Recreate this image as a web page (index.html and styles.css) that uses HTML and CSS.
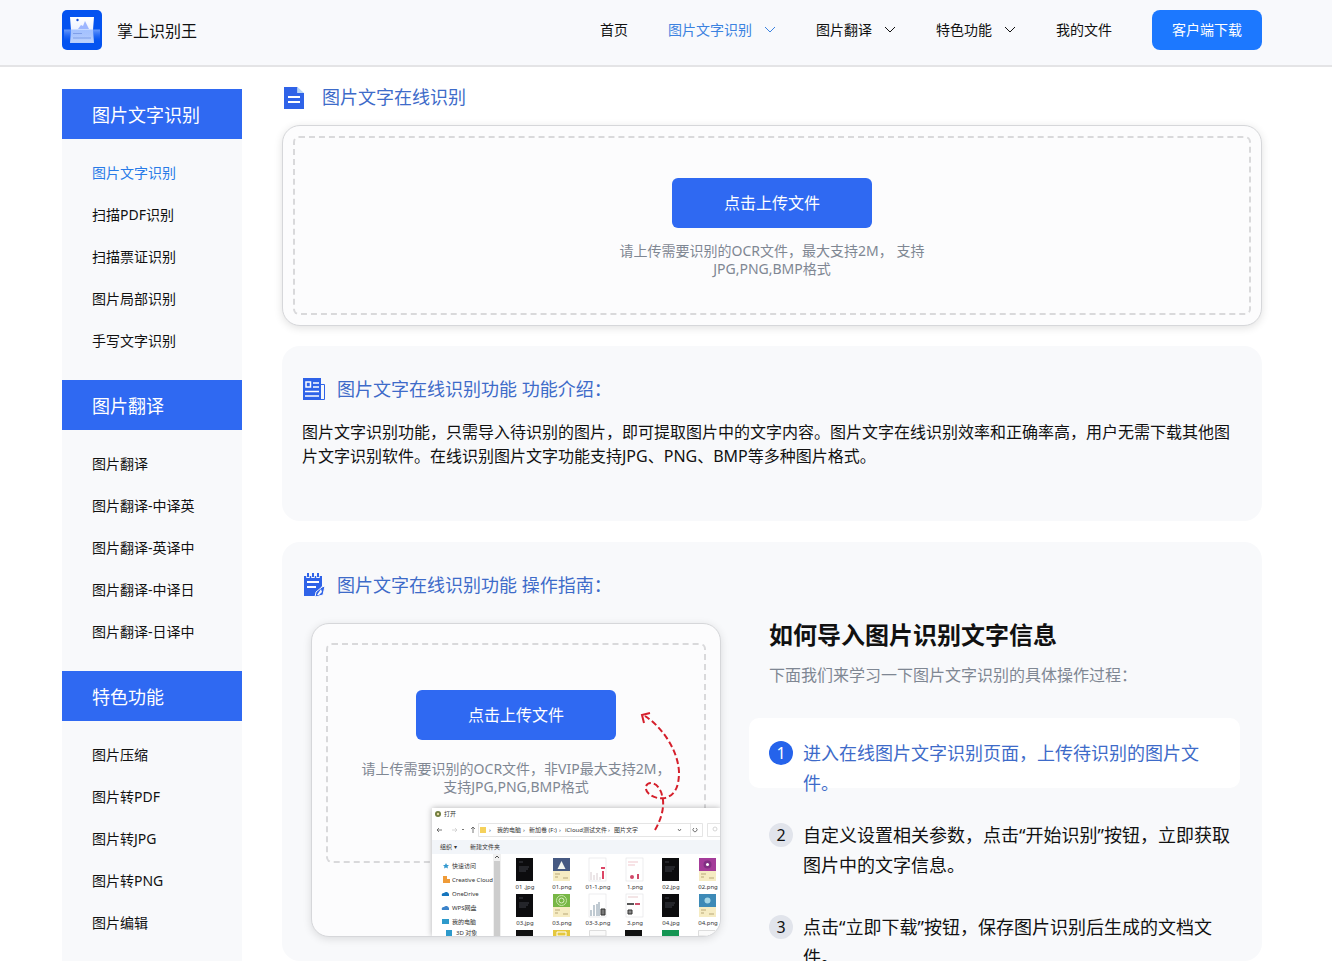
FILE: index.html
```
<!DOCTYPE html>
<html lang="zh-CN">
<head>
<meta charset="utf-8">
<meta name="viewport" content="width=device-width, initial-scale=1">
<title>掌上识别王</title>
<link rel="stylesheet" href="styles.css">
</head>
<body>
<div class="shell">
  <header class="header">
    <div class="wrap header-row">
      <a class="brand" href="#">
        <svg class="logo" width="40" height="40" viewBox="0 0 40 40" aria-hidden="true">
          <defs>
            <linearGradient id="sheet" x1="0" y1="0" x2="0" y2="1"><stop offset="0" stop-color="#fff"/><stop offset=".45" stop-color="#eef3ff"/><stop offset="1" stop-color="#b4cdfc"/></linearGradient>
            <linearGradient id="scan" x1="0" y1="0" x2="0" y2="1"><stop offset="0" stop-color="#8db3ff" stop-opacity=".75"/><stop offset="1" stop-color="#3d78fb" stop-opacity="0"/></linearGradient>
          </defs>
          <rect width="40" height="40" rx="5" fill="#0453f0"/>
          <path d="M8 7H32L31 20 32 33H8L9 20Z" fill="url(#sheet)"/>
          <path d="m16 19 3-4 2 1 2-5 4 8Z" fill="#9db6ff"/>
          <circle cx="15.500" cy="10" r="1.200" fill="#1550d8"/>
          <path d="M2 19.500H38V31H2Z" fill="url(#scan)"/>
          <path d="M11 23.500H20M11 28H29" stroke="#7f9fe9" stroke-width="1"/>
        </svg>
        <span>掌上识别王</span>
      </a>
      <nav class="nav">
        <a href="#">首页</a>
        <a class="current" href="#">图片文字识别<svg class="chev" viewBox="0 0 12 8"><path d="m1 1 5 5 5-5"/></svg></a>
        <a href="#">图片翻译<svg class="chev" viewBox="0 0 12 8"><path d="m1 1 5 5 5-5"/></svg></a>
        <a href="#">特色功能<svg class="chev" viewBox="0 0 12 8"><path d="m1 1 5 5 5-5"/></svg></a>
        <a href="#">我的文件</a>
        <button class="download" type="button">客户端下载</button>
      </nav>
    </div>
  </header>

  <div class="wrap body-row">
    <aside class="sidebar">
      <h2>图片文字识别</h2>
      <ul>
        <li><a class="current" href="#">图片文字识别</a></li>
        <li><a href="#">扫描PDF识别</a></li>
        <li><a href="#">扫描票证识别</a></li>
        <li><a href="#">图片局部识别</a></li>
        <li><a href="#">手写文字识别</a></li>
      </ul>
      <h2>图片翻译</h2>
      <ul>
        <li><a href="#">图片翻译</a></li>
        <li><a href="#">图片翻译-中译英</a></li>
        <li><a href="#">图片翻译-英译中</a></li>
        <li><a href="#">图片翻译-中译日</a></li>
        <li><a href="#">图片翻译-日译中</a></li>
      </ul>
      <h2>特色功能</h2>
      <ul>
        <li><a href="#">图片压缩</a></li>
        <li><a href="#">图片转PDF</a></li>
        <li><a href="#">图片转JPG</a></li>
        <li><a href="#">图片转PNG</a></li>
        <li><a href="#">图片编辑</a></li>
      </ul>
    </aside>

    <main class="main">
      <h1 class="title page-title">
        <svg width="24" height="24" viewBox="0 0 24 24" aria-hidden="true"><path d="M2 2H15.500V8H22V24H2Z" fill="#2f63e8"/><path d="M15.500 2 22 8H15.500Z" fill="#b7d5f5"/><path d="M6 12H18M6 17H18" stroke="#fff" stroke-width="2"/></svg>
        <span>图片文字在线识别</span>
      </h1>

      <section class="upload frame">
        <div class="drop">
          <button class="upload-btn" type="button">点击上传文件</button>
          <p>请上传需要识别的OCR文件，最大支持2M， 支持<br>JPG,PNG,BMP格式</p>
        </div>
      </section>

      <section class="card intro">
        <h2 class="title">
          <svg width="24" height="24" viewBox="0 0 24 24" aria-hidden="true"><path d="M1 1H19V23H1Z" fill="#2f63e8"/><path d="M19 7.500H22.500V22.500H19" fill="none" stroke="#2f63e8"/><path d="M4 5H8.500V10H4ZM11 6H17M11 10H17M3 14.500H17M3 19H17" fill="none" stroke="#fff" stroke-width="1.500"/></svg>
          <span>图片文字在线识别功能 功能介绍：</span>
        </h2>
        <p>图片文字识别功能，只需导入待识别的图片，即可提取图片中的文字内容。图片文字在线识别效率和正确率高，用户无需下载其他图片文字识别软件。在线识别图片文字功能支持JPG、PNG、BMP等多种图片格式。</p>
      </section>

      <section class="card guide">
        <h2 class="title">
          <svg width="24" height="24" viewBox="0 0 24 24" aria-hidden="true"><path d="M2 3H20V13L13 23H2Z" fill="#2f63e8"/><path d="M6 0V5M11 0V5M16 0V5" stroke="#f8f9fb" stroke-width="3.500"/><path d="M6 0V4M11 0V4M16 0V4" stroke="#2f63e8" stroke-width="2"/><path d="M5 9H17M5 14H14" stroke="#fff" stroke-width="2"/><path d="M23 13 21 22 13 24 14 19 20 14Z" fill="#2f63e8" stroke="#f8f9fb"/><path d="m15 22 4-6 1 3-3 3Z" fill="#f8f9fb"/></svg>
          <span>图片文字在线识别功能 操作指南：</span>
        </h2>
        <div class="guide-row">
          <div class="demo frame">
            <div class="drop">
              <button class="upload-btn" type="button">点击上传文件</button>
              <p>请上传需要识别的OCR文件，非VIP最大支持2M，<br>支持JPG,PNG,BMP格式</p>
            </div>
            <svg class="dialog" width="288" height="128" viewBox="0 0 288 128" role="img" aria-label="打开文件窗口">
              <defs>
                <g id="dark"><rect width="17" height="23" fill="#0c0c0e"/><path d="M3 4H7M3 9H13M3 11H12M3 13H10" stroke="#55585f" stroke-width=".7"/></g>
                <g id="sheet-a"><rect width="17" height="23" fill="#fff" stroke="#e2e2e4" stroke-width=".6"/><path d="M2 22V14M5 22V17M8 22V15M11 22V19" stroke="#d8ccd0"/><path d="M12 10H16M14 13V21" stroke="#dc4565" stroke-width="2"/></g>
                <g id="sheet-b"><rect width="17" height="23" fill="#fff" stroke="#e2e2e4" stroke-width=".6"/><path d="M2 4H12M2 7H9" stroke="#e9b0b8" stroke-width=".7"/><circle cx="6" cy="19" r="2" fill="#d04868"/><path d="M12 16V21" stroke="#d04868" stroke-width="2"/></g>
                <g id="sheet-c"><rect width="17" height="23" fill="#fff" stroke="#e2e2e4" stroke-width=".6"/><path d="M2 22V16M5 22V11M8 10V22M10 8V22" stroke="#8195a5"/><path d="M12 15H16V21H12Z" fill="#777" stroke="#333"/></g>
                <g id="sheet-d"><rect width="17" height="23" fill="#fff" stroke="#e2e2e4" stroke-width=".6"/><path d="M2 3H12" stroke="#ddb4b8" stroke-width=".7"/><path d="M1 10H8" stroke="#555" stroke-width="2"/><path d="M9 10H14" stroke="#cc526d" stroke-width="2"/><path d="M2 16H6V20H2Z" fill="#888" stroke="#333"/></g>
                <g id="note"><path d="M0 13H17V23H0Z" fill="#f6ecc3"/><path d="M2 16H7M2 19H5M10 20H15" stroke="#b9a878"/></g>
              </defs>
              <rect width="288" height="128" fill="#fff"/>
              <circle cx="6" cy="6" r="3" fill="#6f7d3f"/><circle cx="6" cy="6" r="1.200" fill="#e8d9a2"/>
              <text x="12" y="8">打开</text>
              <g fill="none" stroke="#555" stroke-width=".8">
                <path d="M10 22H5M7 20 5 22 7 24"/><path d="M20 22H25M23 20 25 22 23 24" stroke="#ccc"/><path d="m30 21 1 1 1-1M41 25V19M39 21 41 19 43 21"/>
                <path d="m246 21 1.500 2 1.500-2M264 20A2 2 0 1 1 262 20"/>
                <path d="M46.500 15.500H270.500V28.500H46.500ZM258.500 15V29M288 15.500H275.500V28.500H288" stroke="#dedede"/>
              </g>
              <path d="M48 19H54V25H48Z" fill="#f5d15b"/>
              <text x="57" y="24">›</text><text x="65" y="24">我的电脑</text><text x="91" y="24">›</text><text x="97" y="24">新加卷 (F:)</text><text x="127" y="24">›</text><text x="133" y="24">iCloud测试文件</text><text x="176" y="24">›</text><text x="182" y="24">图片文字</text>
              <circle cx="283" cy="21" r="2" fill="none" stroke="#ccc" stroke-width=".8"/>
              <rect y="32" width="288" height="14" fill="#f2f5f9"/>
              <text x="8" y="41">组织 ▾</text><text x="38" y="41">新建文件夹</text>
              <path d="m14 55 1 2h2l-1.500 1.500.5 2-2-1-2 1 .5-2L11 57h2Z" fill="#3499cf"/>
              <path d="M11 68H15V71H18V75H11Z" fill="#ef9b38"/>
              <path d="M10 88a2 2 0 0 1 2-3 3 3 0 0 1 5 1v2Z" fill="#1675bd"/>
              <path d="M10 102a2 2 0 0 1 2-3 3 3 0 0 1 5 1v2Z" fill="#3c83ca"/>
              <path d="M10 111H17V116H10ZM14 122H20V128H14Z" fill="#2e9acb"/>
              <text x="20" y="60">快速访问</text><text x="20" y="74">Creative Cloud F</text><text x="20" y="88">OneDrive</text><text x="20" y="102">WPS网盘</text><text x="20" y="116">我的电脑</text><text x="24" y="127">3D 对象</text>
              <rect x="61" y="46" width="8" height="82" fill="#f0f0f0"/><rect x="62" y="53" width="6" height="75" fill="#cdcdcd"/><path d="m63 50 2-2 2 2" fill="none" stroke="#555"/>
              <use href="#dark" x="84" y="50"/><use href="#sheet-a" x="157" y="50"/><use href="#sheet-b" x="194" y="50"/><use href="#dark" x="230" y="50"/>
              <g transform="translate(121 50)"><path d="M0 0H17V13H0Z" fill="#465982"/><path d="m8.500 3 4 8h-8Z" fill="#f3f5ef"/><use href="#note"/></g>
              <g transform="translate(267 50)"><path d="M0 0H17V13H0Z" fill="#a43c9a"/><circle cx="8.500" cy="6.500" r="4" fill="#812f83"/><circle cx="8.500" cy="6.500" r="1.500" fill="#fff"/><use href="#note"/></g>
              <use href="#dark" x="84" y="86"/><use href="#sheet-c" x="157" y="86"/><use href="#sheet-d" x="194" y="86"/><use href="#dark" x="230" y="86"/>
              <g transform="translate(121 86)"><path d="M0 0H17V13H0Z" fill="#78b746"/><circle cx="8.500" cy="6.500" r="5" fill="none" stroke="#c6e5a9"/><circle cx="8.500" cy="6.500" r="2.500" fill="none" stroke="#e0f0c8"/><use href="#note"/></g>
              <g transform="translate(267 86)"><path d="M0 0H17V13H0Z" fill="#3d8ab7"/><circle cx="8.500" cy="6.500" r="3" fill="#a5d6e6"/><use href="#note"/></g>
              <path d="M84 122H101V128H84ZM193 122H210V128H193Z" fill="#111"/><path d="M121 122H138V128H121Z" fill="#e5c83e"/><path d="M230 122H247V128H230Z" fill="#149553"/><path d="M157.500 122.500H174V128H157.500ZM266.500 122.500H283V128H266.500Z" fill="#fafafa" stroke="#ddd"/><path d="M125 124H134V128H125Z" fill="none" stroke="#fff"/>
              <g text-anchor="middle"><text x="93" y="81">01 .jpg</text><text x="130" y="81">01.png</text><text x="166" y="81">01-1.png</text><text x="203" y="81">1.png</text><text x="239" y="81">02.jpg</text><text x="276" y="81">02.png</text><text x="93" y="117">03.jpg</text><text x="130" y="117">03.png</text><text x="166" y="117">03-3.png</text><text x="203" y="117">3.png</text><text x="239" y="117">04.jpg</text><text x="276" y="117">04.png</text></g>
            </svg>
            <svg class="arrow" width="50" height="124" viewBox="0 0 50 124" aria-hidden="true"><path d="M20 120C27 108 30 95 27 85 24 73 14 70 11 76 9 83 20 90 30 88 41 85 44 75 44 62 43 40 27 17 10 6" stroke-dasharray="6 3"/><path d="M15 3 7 5 9 13"/></svg>
          </div>
          <div class="howto">
            <h3>如何导入图片识别文字信息</h3>
            <p>下面我们来学习一下图片文字识别的具体操作过程：</p>
            <ol class="steps">
              <li class="active"><span class="num">1</span><span>进入在线图片文字识别页面，上传待识别的图片文件。</span></li>
              <li><span class="num">2</span><span>自定义设置相关参数，点击“开始识别”按钮，立即获取图片中的文字信息。</span></li>
              <li><span class="num">3</span><span>点击“立即下载”按钮，保存图片识别后生成的文档文件。</span></li>
            </ol>
          </div>
        </div>
      </section>
    </main>
  </div>
</div>
</body>
</html>
```
FILE: styles.css
```
* { box-sizing: border-box; }
body, h1, h2, h3, p, ul, ol { margin: 0; padding: 0; }
body {
  font-family: "Noto Sans", "Noto Sans CJK SC", sans-serif;
  font-size: 14px;
  color: #111;
  background: #fff;
}
ul, ol { list-style: none; }
a { color: inherit; text-decoration: none; }
button { font: inherit; border: 0; color: #fff; cursor: pointer; }
svg { display: block; flex: none; }

.shell { display: flex; flex-direction: column; height: 100vh; overflow: hidden; }
.wrap { width: 100%; max-width: 1332px; margin: 0 auto; padding: 0 70px 0 62px; }

.header { flex: none; height: 67px; background: #f8f9fc; border-bottom: 2px solid #e4e4e6; }
.header-row { display: flex; align-items: center; justify-content: space-between; height: 60px; }
.brand { display: flex; align-items: center; gap: 15px; font-size: 16px; }
.nav { display: flex; align-items: center; gap: 40px; line-height: 20px; white-space: nowrap; }
.nav a { display: flex; align-items: center; gap: 12px; }
.nav .current { color: #3b82e0; }
.chev { width: 12px; height: 8px; fill: none; stroke: currentColor; stroke-width: 1; }
.download { width: 110px; height: 40px; border-radius: 8px; background: #1c78ff; }

.body-row { display: flex; flex: 1; gap: 40px; min-height: 0; }
.sidebar { flex: none; width: 180px; margin-top: 22px; background: #f8f9fb; }
.sidebar h2 { height: 50px; padding-left: 30px; background: #2f69f2; color: #fff; font-size: 18px; font-weight: 400; line-height: 52px; }
.sidebar ul { padding: 13px 0 18px 30px; }
.sidebar li { height: 42px; line-height: 42px; }
.sidebar .current { color: #287be8; }

.main { display: flex; flex: 1; flex-direction: column; min-width: 0; }
.title { display: flex; align-items: center; gap: 11px; color: #3e6bc9; font-size: 18px; font-weight: 400; line-height: 24px; }
.page-title { gap: 16px; margin: 18px 0 16px; }

.frame { border: 1px solid #d6d7da; border-radius: 18px; background: #fcfcfd; box-shadow: 0 2px 8px rgba(0, 0, 0, .12); }
.drop { display: flex; flex-direction: column; align-items: center; border: 2px dashed #d9d9db; border-radius: 6px; color: #7f8793; line-height: 18px; text-align: center; white-space: nowrap; }
.upload-btn { flex: none; width: 200px; height: 50px; border-radius: 6px; background: #2f69f2; font-size: 16px; }
.upload { flex: none; padding: 10px; }
.upload .drop { height: 179px; padding-top: 40px; }
.upload .drop p { margin-top: 14px; }

.card { border-radius: 18px; background: #f8f9fb; }
.intro { flex: none; min-height: 175px; margin: 20px 0 21px; padding: 31px 20px; }
.intro p { margin-top: 19px; font-size: 16px; line-height: 24px; }
.guide { flex: 1; min-height: 0; padding: 31px 22px 0 20px; }

.guide-row { display: flex; gap: 28px; margin-top: 26px; padding-left: 9px; }
.demo { position: relative; flex: none; width: 410px; height: 314px; padding: 19px 14px; overflow: hidden; }
.demo .drop { height: 220px; padding-top: 45px; }
.demo .drop p { margin-top: 20px; }
.dialog { position: absolute; right: 0; bottom: 0; box-shadow: 0 0 6px rgba(0, 0, 0, .3); }
.dialog text { fill: #333; font-size: 6px; }
.arrow { position: absolute; right: 35px; top: 86px; fill: none; stroke: #d51f2b; stroke-width: 2; }

.howto { flex: 1; min-width: 0; }
.howto h3 { padding-left: 20px; margin-top: -6px; font-size: 24px; line-height: 36px; }
.howto p { padding-left: 20px; margin: 10px 0 31px; color: #7f8793; font-size: 16px; line-height: 24px; }
.steps { display: flex; flex-direction: column; gap: 12px; font-size: 18px; line-height: 30px; }
.steps li { display: flex; gap: 10px; height: 80px; padding: 20px 8px 0 20px; }
.steps .active { height: 70px; border-radius: 10px; background: #fff; color: #3e6bc9; }
.num { flex: none; width: 24px; height: 24px; margin-top: 3px; border-radius: 50%; background: #e1e4eb; font-size: 16px; line-height: 24px; text-align: center; }
.active .num { background: #2563eb; color: #fff; }
```
